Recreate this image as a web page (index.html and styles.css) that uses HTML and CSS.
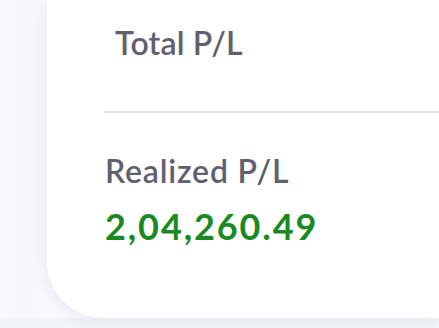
FILE: index.html
```html
<!DOCTYPE html>
<html lang="en">
<head>
<meta charset="utf-8">
<title>P/L</title>
<link rel="stylesheet" href="styles.css">
</head>
<body>
<div class="page">
  <section class="card">
    <div class="total-row">
      <span class="label label-total">Total P/L</span>
    </div>
    <div class="divider"></div>
    <div class="realized">
      <div class="label label-realized">Realized P/L</div>
      <div class="value positive">2,04,260.49</div>
    </div>
  </section>
</div>
</body>
</html>
```

FILE: styles.css
```css
html, body {
  margin: 0;
  padding: 0;
}
body {
  background: #f3f4f7;
  font-family: "Lato", "Noto Sans", sans-serif;
  width: 439px;
  height: 328px;
  overflow: hidden;
}
.page {
  height: 318px;
  padding-left: 47px;
  background: linear-gradient(90deg, #f9f9fc 0px, #f6f6fb 30px, #f9f9fd 46px);
}
.card {
  height: 318px;
  background: #ffffff;
  border-radius: 0 0 0 56px;
  box-shadow: -4px 4px 14px rgba(180, 180, 210, 0.18);
  box-sizing: border-box;
  padding-top: 23px;
}
.total-row {
  padding-left: 68px;
  height: 40px;
}
.label {
  font-size: 32px;
  line-height: 40px;
  font-weight: 600;
  color: #5f5f6f;
}
.label-total {
  letter-spacing: 0.2px;
}
.label-realized {
  letter-spacing: 0.8px;
}
.divider {
  margin-top: 48px;
  margin-left: 57px;
  height: 2px;
  background: #e3e3e5;
}
.realized {
  padding-left: 58px;
  padding-top: 38px;
}
.value {
  font-size: 36px;
  line-height: 44px;
  font-weight: 700;
  letter-spacing: 1.9px;
  margin-top: 13px;
}
.positive {
  color: #1a8a20;
}
```
